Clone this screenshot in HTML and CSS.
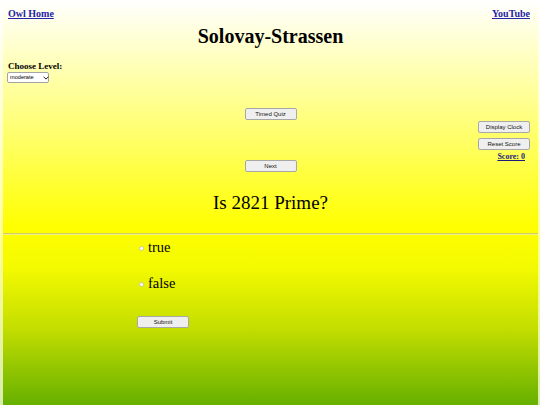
FILE: index.html
```html
<!DOCTYPE html>
<html>
<head>
<meta charset="utf-8">
<title>Solovay-Strassen</title>
<link rel="stylesheet" href="styles.css">
</head>
<body>
<div class="page">
  <header class="topbar">
    <a class="toplink" href="#">Owl Home</a>
    <a class="toplink" href="#">YouTube</a>
  </header>
  <h1 class="title">Solovay-Strassen</h1>
  <div class="level">
    <label class="level-label" for="lvl">Choose Level:</label>
    <span class="select-wrap">
      <select id="lvl" class="level-select">
        <option>easy</option>
        <option selected>moderate</option>
        <option>hard</option>
      </select>
      <svg class="chev" width="6" height="4" viewBox="0 0 6 4"><path d="M0.6 0.8 L3 3.1 L5.4 0.8" fill="none" stroke="#222" stroke-width="1"/></svg>
    </span>
  </div>
  <div class="controls">
    <div class="center-col">
      <button class="btn">Timed Quiz</button>
      <button class="btn">Next</button>
    </div>
    <div class="right-col">
      <button class="btn">Display Clock</button>
      <button class="btn">Reset Score</button>
      <a class="score" href="#">Score: 0</a>
    </div>
  </div>
  <p class="question">Is 2821 Prime?</p>
  <hr class="divider">
  <form class="answers">
    <label class="choice"><input type="radio" name="ans" class="radio">true</label>
    <label class="choice choice-false"><input type="radio" name="ans" class="radio">false</label>
    <button type="button" class="btn submit">Submit</button>
  </form>
</div>
</body>
</html>
```
FILE: styles.css
```css
html {
  margin: 0;
  min-height: 100%;
  background: linear-gradient(to bottom, #ffffff 0%, #ffffb0 50%, #ffff90 60%, #d8ecb0 100%);
}
body {
  margin: 0 2px 0 3px;
  min-height: 100vh;
  background: linear-gradient(to bottom, #ffffff 0%, #ffff60 36%, #ffff00 56%, #f4fa00 66%, #c4de00 81%, #66b000 100%);
  font-family: "Liberation Serif", "Times New Roman", serif;
  color: #000;
}
.page {
  padding-top: 8px;
}
.topbar {
  display: flex;
  justify-content: space-between;
  padding: 0 8px 0 5px;
}
.toplink {
  font-size: 10px;
  line-height: 12px;
  font-weight: bold;
  color: #2424a8;
}
.title {
  margin: 4px 0 0;
  font-size: 20px;
  line-height: 24px;
  font-weight: bold;
  text-align: center;
}
.level {
  margin-top: 12.5px;
  padding-left: 5px;
  display: flex;
  flex-direction: column;
  align-items: flex-start;
}
.level-label {
  font-size: 9px;
  line-height: 11px;
  font-weight: bold;
}
.select-wrap {
  position: relative;
  display: block;
  margin-top: 0.5px;
  margin-left: -1px;
  height: 11px;
}
.level-select {
  appearance: none;
  display: block;
  width: 42px;
  height: 11px;
  padding: 0 0 0 2px;
  font-family: "Liberation Sans", Arial, sans-serif;
  font-size: 5.6px;
  line-height: 9px;
  border: 1px solid #a5a5a5;
  border-radius: 2px;
  background: #fff;
  color: #000;
}
.chev {
  position: absolute;
  left: 36px;
  top: 4px;
  pointer-events: none;
}
.controls {
  margin-top: 25px;
  display: grid;
  grid-template-columns: 1fr auto 1fr;
}
.center-col {
  grid-column: 2;
  display: flex;
  flex-direction: column;
  gap: 40px;
}
.right-col {
  grid-column: 3;
  justify-self: end;
  margin-right: 8px;
  padding-top: 13px;
  display: flex;
  flex-direction: column;
  align-items: flex-end;
  gap: 5px;
}
.btn {
  width: 52px;
  height: 12px;
  padding: 0;
  font-family: "Liberation Sans", Arial, sans-serif;
  font-size: 6px;
  line-height: 10px;
  color: #111;
  background: #efefef;
  border: 1px solid #a8a8a8;
  border-radius: 2px;
}
.score {
  margin: -2.7px 5px 0 0;
  font-size: 8px;
  line-height: 10px;
  font-weight: bold;
  color: #1c1c80;
}
.question {
  margin: 20px 0 0;
  font-size: 19px;
  line-height: 22px;
  text-align: center;
}
.divider {
  margin: 19px 0 0;
  border: 0;
  border-top: 1px solid #cfcc66;
  border-bottom: 1px solid #f2f080;
  height: 0;
}
.answers {
  margin: 4.3px 0 0 134px;
  display: flex;
  flex-direction: column;
  align-items: flex-start;
}
.choice {
  display: flex;
  align-items: center;
  font-size: 14.5px;
  line-height: 17px;
}
.choice-false {
  margin-top: 18.6px;
}
.radio {
  appearance: none;
  width: 5px;
  height: 5px;
  margin: 2px 4px 0 2px;
  border: 1px solid #c8c8a0;
  border-radius: 50%;
  background: #fff;
}
.submit {
  margin-top: 24px;
  height: 12.5px;
}
```
